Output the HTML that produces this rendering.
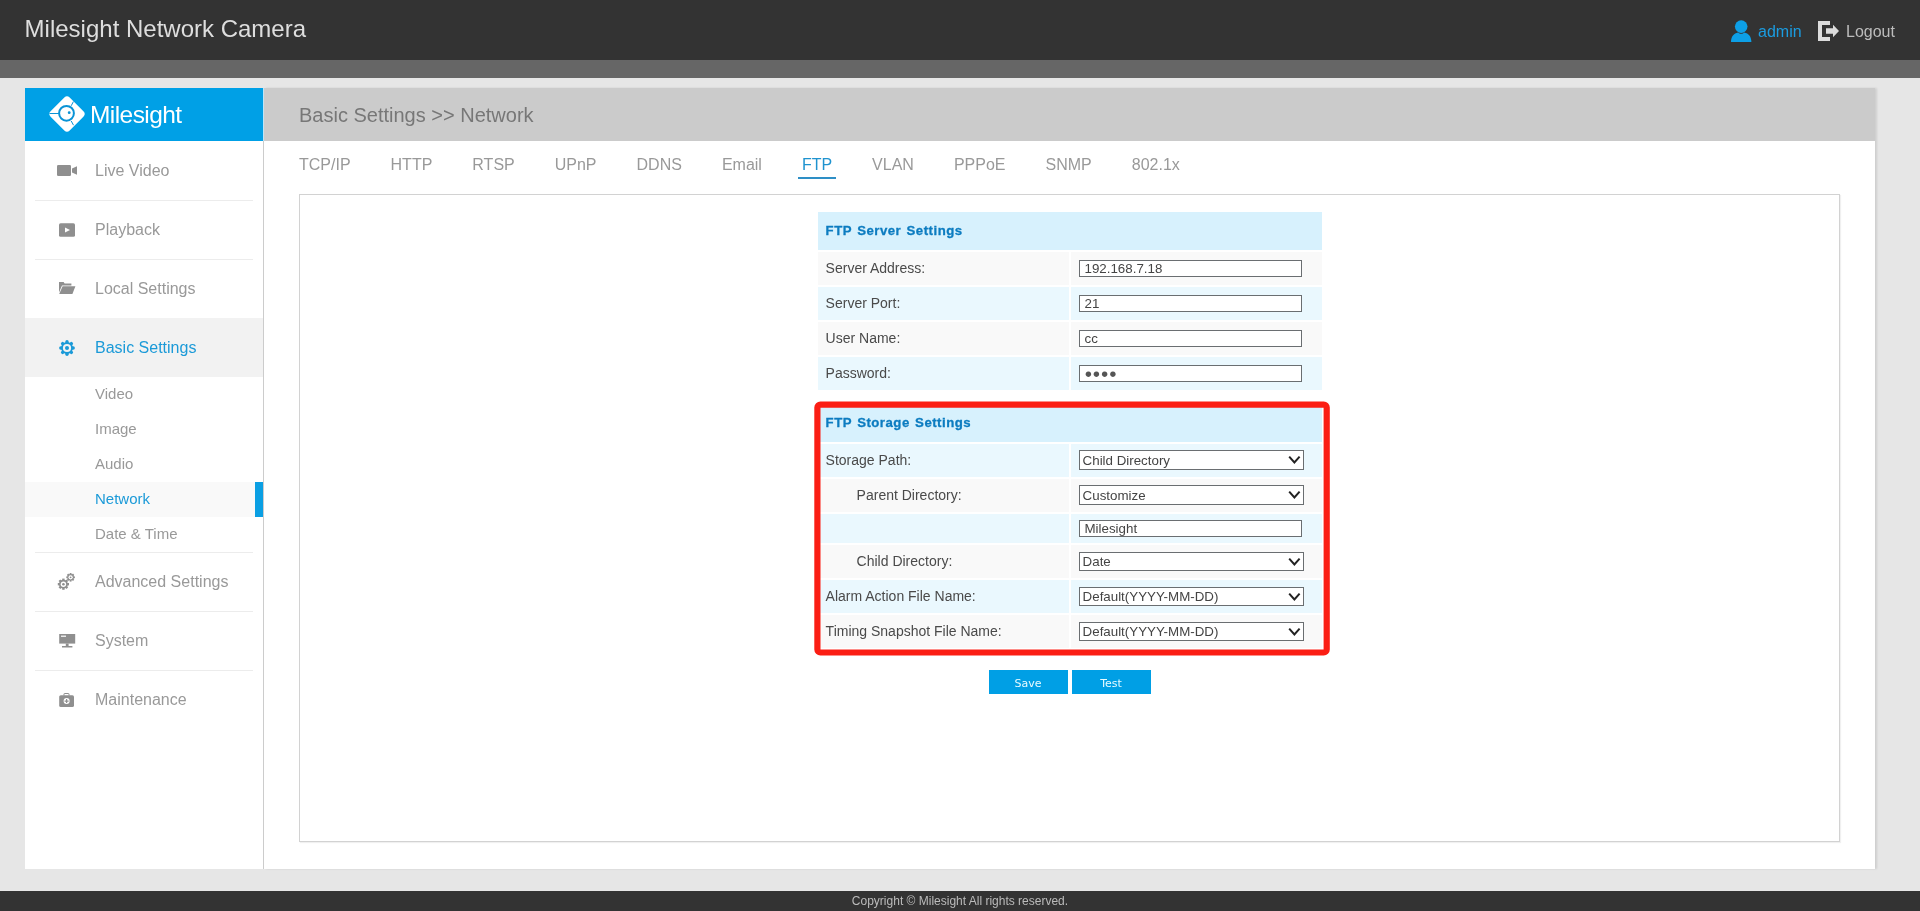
<!DOCTYPE html>
<html lang="en">
<head>
<meta charset="utf-8">
<title>Milesight Network Camera</title>
<style>
*{box-sizing:border-box;margin:0;padding:0}
html,body{width:1920px;height:911px;overflow:hidden}
body{will-change:transform;background:#e6e6e6;font-family:"Liberation Sans",Arial,sans-serif;position:relative;color:#444}
a{text-decoration:none;color:inherit}
ul{list-style:none}

/* ---------- header ---------- */
#top{position:absolute;left:0;top:0;width:1920px;height:60px;background:#333}
#top h1{position:absolute;left:24.6px;top:0;height:58px;line-height:58px;font-size:24px;font-weight:normal;color:#dedede;white-space:nowrap}
#stripe{position:absolute;left:0;top:60px;width:1920px;height:18px;background:#666}
#user{position:absolute;left:1731px;top:19px;height:24px}
#user svg{position:absolute;left:0;top:1px}
#user span{position:absolute;left:27px;top:0;line-height:26px;font-size:16px;color:#1b9ce0}
#logout{position:absolute;left:1818px;top:19px;height:24px}
#logout svg{position:absolute;left:0;top:2px}
#logout span{position:absolute;left:28px;top:0;line-height:26px;font-size:16px;color:#bdbdbd}

/* ---------- sidebar ---------- */
#side{position:absolute;left:25px;top:88px;width:239px;height:781px;background:#fff;border-right:1px solid #ccc}
#logo{position:absolute;left:0;top:0;width:238px;height:53px;background:#00a0e6;box-shadow:1px 0 0 #bde6f9}
#logo svg{position:absolute;left:21.2px;top:5.2px}
#logo b{position:absolute;left:65px;top:9px;line-height:36px;font-size:24.5px;font-weight:normal;color:#fff;letter-spacing:-0.57px}
#menu{position:absolute;left:0;top:53px;width:238px}
#menu li.m{position:absolute;left:0;width:238px;height:59px}
#menu li.m a{position:absolute;left:70px;top:0;line-height:60px;font-size:16px;color:#999;white-space:nowrap}
#menu li.m svg{position:absolute;left:30px;top:17px}
#menu li.m.on{background:#f2f2f2}
#menu li.m.on a{color:#1b9ad8}
#menu li.sep{position:absolute;left:10px;width:218px;height:1px;background:#ececec}
#menu li.s{position:absolute;left:0;width:238px;height:35px}
#menu li.s a{position:absolute;left:70px;top:0;line-height:33px;font-size:15px;color:#999}
#menu li.s.on{background:#f9f9f9;border-right:8px solid #0a9fe3}
#menu li.s.on a{color:#1b9ad8}

/* ---------- main ---------- */
#main{position:absolute;left:264px;top:88px;width:1611px;height:781px;background:#fff;box-shadow:2px 0 2px rgba(0,0,0,.10)}
#crumb{position:absolute;left:0;top:0;width:1611px;height:53px;background:#cbcbcb}
#crumb h2{position:absolute;left:35px;top:0;line-height:55px;font-size:20px;font-weight:normal;color:#777;white-space:nowrap}
#tabs{position:absolute;left:31px;top:53px;height:40px;white-space:nowrap;font-size:0}
#tabs li{display:inline-block;height:38px;padding:0 4px;margin-right:32px;font-size:16px;line-height:48px;color:#999;border-bottom:2px solid transparent}
#tabs li.on{color:#1f93cf;border-bottom-color:#2e8fc6}
#panel{position:absolute;left:35px;top:106px;width:1541px;height:648px;border:1px solid #d2d2d2;box-shadow:1px 1px 1px rgba(0,0,0,.06)}

/* ---------- form tables ---------- */
table.cfg{position:absolute;left:516px;width:508px;border-collapse:separate;border-spacing:2px;table-layout:fixed}
table.cfg th{height:38px;line-height:15px;vertical-align:top;background:#d7f1fd;text-align:left;padding-left:7.6px;font-size:13.2px;font-weight:bold;letter-spacing:.5px;word-spacing:1.2px;color:#0c7cc0;-webkit-text-stroke:.3px #0c7cc0;padding-bottom:0;padding-top:11.4px}
table.cfg td{height:33px;font-size:14px;color:#444;padding:0;vertical-align:middle;white-space:nowrap}
table.cfg td.l{width:251px;padding-left:7.6px;padding-bottom:1.6px;color:#4a4a4a}
table.cfg td.l.in{padding-left:38.6px}
table.cfg td.r{width:251px;padding-left:8px;vertical-align:top}
table.cfg tr.a td{background:#f9f9f9}
table.cfg tr.b td{background:#eaf8fe}
table.cfg tr.short td{height:29px}
table.cfg tr.short .ipt{margin-top:6px}
.ipt{display:block;margin-top:8px;width:223px;height:17px;border:1px solid #6a6e71;background:#fff;font-size:13.33px;line-height:15px;padding-left:4.5px;color:#444;overflow:hidden}
.ipt.pw{font-family:"DejaVu Sans",sans-serif;font-size:7.2px;letter-spacing:1.9px;line-height:16px;padding-left:5.2px;color:#555}
.sel{display:block;margin-top:6px;position:relative;width:225px;height:20px;border:1px solid #6a6e71;background:#fff;font-size:13.33px;line-height:19px;padding-left:2.6px;color:#444;overflow:hidden}
.sel svg{position:absolute;right:2px;top:4px}
.sel.s19{margin-top:7px;height:19px;line-height:17px}
#redbox{position:absolute;left:510px;top:200px;pointer-events:none}
#btns{position:absolute;left:689px;top:475px;white-space:nowrap;font-size:0}
#btns span{display:inline-block;width:79px;height:24px;background:#009fe5;color:#e8fbff;font-family:"DejaVu Sans",Verdana,sans-serif;font-size:11px;line-height:27px;text-align:center;margin-right:4px;padding-right:1px;overflow:hidden}

/* ---------- footer ---------- */
#foot{position:absolute;left:0;top:891px;width:1920px;height:20px;background:#333;color:#bbb;font-size:12px;line-height:21px;text-align:center}
</style>
</head>
<body>

<div id="top">
  <h1>Milesight Network Camera</h1>
  <div id="user">
    <svg width="22" height="23" viewBox="0 0 22 23"><circle cx="10.2" cy="6.6" r="6.3" fill="#0d9fe6"/><path d="M0 22 C0 16.5 2.9 13.2 7 12.4 C8 13.3 9 13.7 10.2 13.7 C11.4 13.7 12.4 13.3 13.4 12.4 C17.5 13.2 20.4 16.5 20.4 22 Z" fill="#0d9fe6"/></svg>
    <span>admin</span>
  </div>
  <div id="logout">
    <svg width="22" height="21" viewBox="0 0 22 21"><path d="M0 0 H12 V4 H4 V16 H12 V20 H0 Z" fill="#dcdcdc"/><path d="M8 7.3 H15 V3.8 L21 10 L15 16.2 V12.7 H8 Z" fill="#dcdcdc"/></svg>
    <span>Logout</span>
  </div>
</div>
<div id="stripe"></div>

<div id="side">
  <div id="logo">
    <svg width="42" height="42" viewBox="0 0 42 42">
      <rect x="7.5" y="7.5" width="27" height="27" rx="3.8" fill="#fff" transform="rotate(45 21 21)"/>
      <circle cx="20.5" cy="20.3" r="7.4" fill="none" stroke="#0a93d6" stroke-width="2"/>
      <circle cx="23.2" cy="19.7" r="1.4" fill="#0a93d6"/>
      <path d="M3.5 20.5 H13 M25.2 12.8 L27.4 8.6 M25.2 28 L27.5 32.2" stroke="#0a93d6" stroke-width="1" fill="none"/>
    </svg>
    <b>Milesight</b>
  </div>
  <ul id="menu">
    <li class="m" style="top:0"><svg width="22" height="24" viewBox="0 0 22 24"><rect x="2" y="7" width="14" height="11" rx="1.3" fill="#8f8f8f"/><path d="M17 10.6 L22 8.2 V16.8 L17 14.4 Z" fill="#8f8f8f"/></svg><a>Live Video</a></li>
    <li class="sep" style="top:59px"></li>
    <li class="m" style="top:59px"><svg width="22" height="24" viewBox="0 0 22 24"><rect x="4" y="6.2" width="16" height="13.6" rx="1.6" fill="#8f8f8f"/><path d="M10 10.6 L15 13 L10 15.6 Z" fill="#fff"/></svg><a>Playback</a></li>
    <li class="sep" style="top:118px"></li>
    <li class="m" style="top:118px"><svg width="22" height="24" viewBox="0 0 22 24"><path d="M4 6 H8.6 L9.6 7.6 H16.4 V9.4 H7 L4 16.6 Z" fill="#8f8f8f"/><path d="M7.6 10.2 H20.4 L17.4 18 H4.2 Z" fill="#8f8f8f"/></svg><a>Local Settings</a></li>
    <li class="m on" style="top:177px"><svg width="24" height="24" viewBox="0 0 24 24"><g transform="translate(12 13)"><circle r="5.9" fill="#1b9ad8"/><g stroke="#1b9ad8" stroke-width="3.4" stroke-linecap="round"><path d="M0 0 L6.20 0.00"/><path d="M0 0 L4.38 4.38"/><path d="M0 0 L0.00 6.20"/><path d="M0 0 L-4.38 4.38"/><path d="M0 0 L-6.20 0.00"/><path d="M0 0 L-4.38 -4.38"/><path d="M0 0 L-0.00 -6.20"/><path d="M0 0 L4.38 -4.38"/></g><circle r="4.1" fill="#f2f2f2"/><circle r="2" fill="#1b9ad8"/></g></svg><a>Basic Settings</a></li>
    <li class="s" style="top:236px"><a>Video</a></li>
    <li class="s" style="top:271px"><a>Image</a></li>
    <li class="s" style="top:306px"><a>Audio</a></li>
    <li class="s on" style="top:341px"><a>Network</a></li>
    <li class="s" style="top:376px"><a>Date &amp; Time</a></li>
    <li class="sep" style="top:411px"></li>
    <li class="m" style="top:411px"><svg width="22" height="24" viewBox="0 0 22 24" style="top:18px"><g fill="#8f8f8f"><g transform="translate(8.4 14.2)"><circle r="4.4"/><path d="M-1.2 -5.6h2.4v11.2h-2.4z"/><path d="M-1.2 -5.6h2.4v11.2h-2.4z" transform="rotate(45)"/><path d="M-1.2 -5.6h2.4v11.2h-2.4z" transform="rotate(90)"/><path d="M-1.2 -5.6h2.4v11.2h-2.4z" transform="rotate(135)"/></g><g transform="translate(15.6 7.3)"><circle r="3.3"/><path d="M-.9 -4.3h1.8v8.6h-1.8z"/><path d="M-.9 -4.3h1.8v8.6h-1.8z" transform="rotate(45)"/><path d="M-.9 -4.3h1.8v8.6h-1.8z" transform="rotate(90)"/><path d="M-.9 -4.3h1.8v8.6h-1.8z" transform="rotate(135)"/></g></g><circle cx="8.4" cy="14.2" r="2.7" fill="#fff"/><circle cx="8.4" cy="14.2" r="1.3" fill="#8f8f8f"/><circle cx="15.6" cy="7.3" r="2.1" fill="#fff"/><circle cx="15.6" cy="7.3" r="0.9" fill="#8f8f8f"/></svg><a>Advanced Settings</a></li>
    <li class="sep" style="top:470px"></li>
    <li class="m" style="top:470px"><svg width="22" height="24" viewBox="0 0 22 24"><path d="M4.2 6 H20.2 V15.6 H4.2 Z" fill="#8f8f8f"/><path d="M6 7.6 H11 V8.8 H6 Z" fill="#fff"/><path d="M10.8 15.6 H13.6 V18 H10.8 Z M7 18 H17.4 V19.6 H7 Z" fill="#8f8f8f"/></svg><a>System</a></li>
    <li class="sep" style="top:529px"></li>
    <li class="m" style="top:529px"><svg width="22" height="24" viewBox="0 0 22 24"><path d="M9 8.6 V7 Q9 6.5 9.5 6.5 H13.5 Q14 6.5 14 7 V8.6" fill="none" stroke="#8f8f8f" stroke-width="1"/><rect x="4.2" y="8.2" width="14.8" height="11.8" rx="1.6" fill="#8f8f8f"/><circle cx="11.6" cy="14.1" r="3" fill="#fff"/><path d="M11.6 12.1 V16.1 M9.6 14.1 H13.6" stroke="#8f8f8f" stroke-width="1.2"/></svg><a>Maintenance</a></li>
  </ul>
</div>

<div id="main">
  <div id="crumb"><h2>Basic Settings &gt;&gt; Network</h2></div>
  <ul id="tabs">
    <li>TCP/IP</li><li>HTTP</li><li>RTSP</li><li>UPnP</li><li>DDNS</li><li>Email</li><li class="on">FTP</li><li>VLAN</li><li>PPPoE</li><li>SNMP</li><li>802.1x</li>
  </ul>
  <div id="panel">
    <table class="cfg" style="top:15px">
      <tr><th colspan="2">FTP Server Settings</th></tr>
      <tr class="a"><td class="l">Server Address:</td><td class="r"><span class="ipt">192.168.7.18</span></td></tr>
      <tr class="b"><td class="l">Server Port:</td><td class="r"><span class="ipt">21</span></td></tr>
      <tr class="a"><td class="l">User Name:</td><td class="r"><span class="ipt">cc</span></td></tr>
      <tr class="b"><td class="l">Password:</td><td class="r"><span class="ipt pw">&#9679;&#9679;&#9679;&#9679;</span></td></tr>
    </table>
    <table class="cfg" style="top:207px">
      <tr><th colspan="2">FTP Storage Settings</th></tr>
      <tr class="b"><td class="l">Storage Path:</td><td class="r"><span class="sel">Child Directory<svg width="14" height="10" viewBox="0 0 14 10"><path d="M2.2 1.7 L7.4 7.5 L12.6 1.7" fill="none" stroke="#222" stroke-width="2"/></svg></span></td></tr>
      <tr class="a"><td class="l in">Parent Directory:</td><td class="r"><span class="sel">Customize<svg width="14" height="10" viewBox="0 0 14 10"><path d="M2.2 1.7 L7.4 7.5 L12.6 1.7" fill="none" stroke="#222" stroke-width="2"/></svg></span></td></tr>
      <tr class="b short"><td class="l"></td><td class="r"><span class="ipt">Milesight</span></td></tr>
      <tr class="a"><td class="l in">Child Directory:</td><td class="r"><span class="sel s19">Date<svg width="14" height="10" viewBox="0 0 14 10"><path d="M2.2 1.7 L7.4 7.5 L12.6 1.7" fill="none" stroke="#222" stroke-width="2"/></svg></span></td></tr>
      <tr class="b"><td class="l">Alarm Action File Name:</td><td class="r"><span class="sel s19">Default(YYYY-MM-DD)<svg width="14" height="10" viewBox="0 0 14 10"><path d="M2.2 1.7 L7.4 7.5 L12.6 1.7" fill="none" stroke="#222" stroke-width="2"/></svg></span></td></tr>
      <tr class="a"><td class="l">Timing Snapshot File Name:</td><td class="r"><span class="sel s19">Default(YYYY-MM-DD)<svg width="14" height="10" viewBox="0 0 14 10"><path d="M2.2 1.7 L7.4 7.5 L12.6 1.7" fill="none" stroke="#222" stroke-width="2"/></svg></span></td></tr>
    </table>
    <svg id="redbox" width="526" height="266" viewBox="0 0 526 266"><rect x="7.4" y="9.6" width="509.3" height="247.9" rx="3" fill="none" stroke="#fb1e14" stroke-width="6.2"/></svg>
    <div id="btns"><span>Save</span><span>Test</span></div>
  </div>
</div>

<div id="foot">Copyright &copy; Milesight All rights reserved.</div>

</body>
</html>
